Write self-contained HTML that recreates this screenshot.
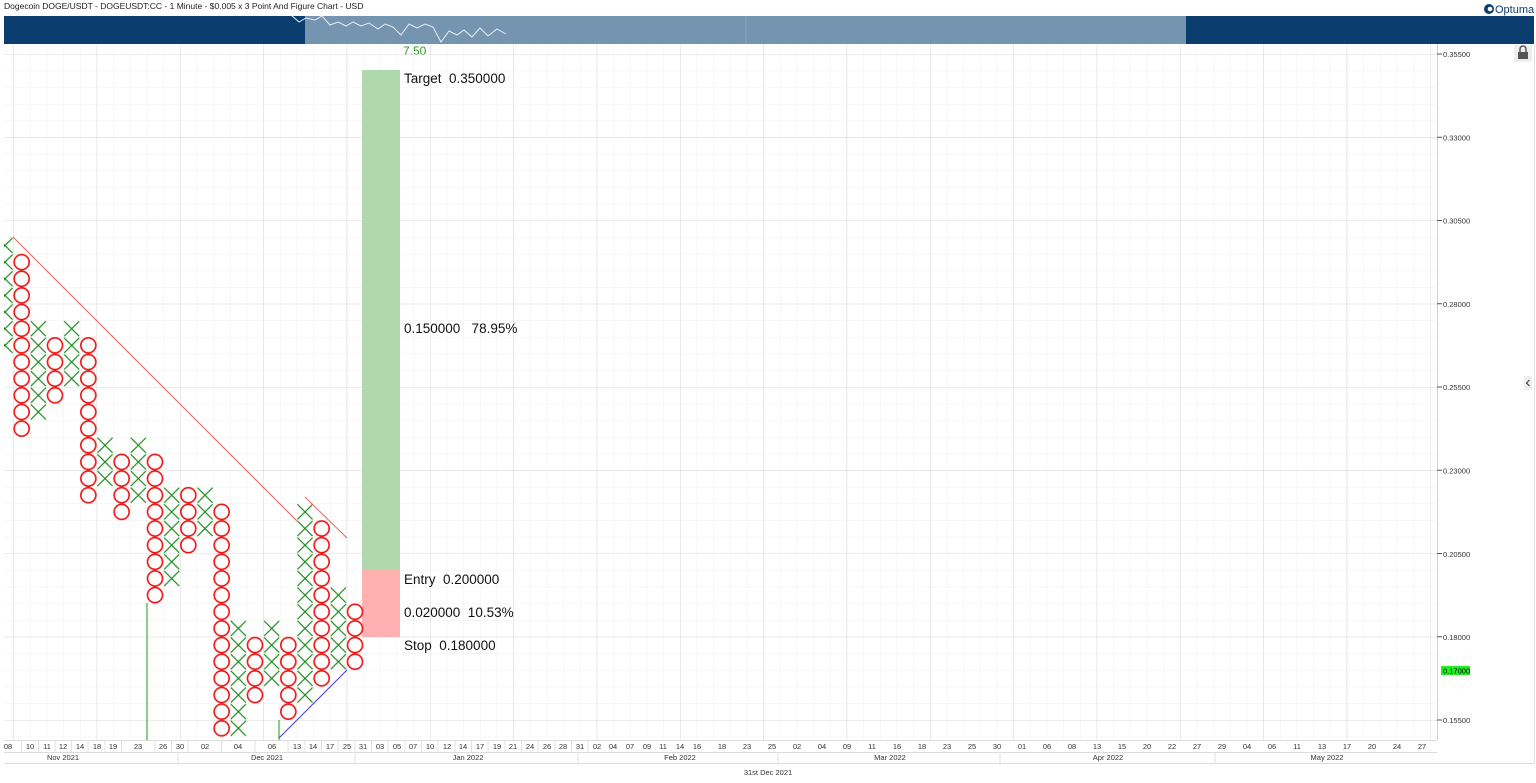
<!DOCTYPE html>
<html><head><meta charset="utf-8"><style>
html,body{margin:0;padding:0;background:#fff;width:1536px;height:783px;overflow:hidden;font-family:"Liberation Sans",sans-serif}
svg{position:absolute;left:0;top:0}
.pre{white-space:pre}
</style></head><body>
<svg width="1536" height="783" viewBox="0 0 1536 783" xmlns="http://www.w3.org/2000/svg" font-family="Liberation Sans, sans-serif">
<defs>
<pattern id="gmin" x="-3.333" y="54" width="16.667" height="16.65" patternUnits="userSpaceOnUse">
<path d="M0 0H16.667M0 0V16.65" stroke="#efefef" stroke-width="1" fill="none"/></pattern>
<pattern id="gmaj" x="13.333" y="54" width="83.333" height="83.25" patternUnits="userSpaceOnUse">
<path d="M0 0H83.333M0 0V83.25" stroke="#d9d9d9" stroke-width="1" fill="none"/></pattern>
<pattern id="PX" x="-3.333" y="54" width="16.667" height="16.65" patternUnits="userSpaceOnUse">
<path d="M0.8 0.8L15.9 15.9M15.9 0.8L0.8 15.9" stroke="#1e8c1e" stroke-width="1.2" fill="none"/></pattern>
<pattern id="PO" x="-3.333" y="54" width="16.667" height="16.65" patternUnits="userSpaceOnUse">
<circle cx="8.333" cy="8.325" r="7.5" stroke="#f01010" stroke-width="1.6" fill="none"/></pattern>
<clipPath id="cc"><rect x="4" y="44" width="1433" height="696"/></clipPath>
</defs>
<text x="4" y="9" font-size="8.5" fill="#222">Dogecoin DOGE/USDT - DOGEUSDT:CC - 1 Minute - $0.005 x 3 Point And Figure Chart - USD</text>
<circle cx="1489" cy="9" r="5" fill="#0b3d6e"/><circle cx="1490" cy="9" r="2.3" fill="#fff"/>
<text x="1495" y="13" font-size="11" fill="#0b3d6e">Optuma</text>
<rect x="4" y="16" width="1530" height="28" fill="#0b3d6e"/>
<rect x="305" y="16" width="881" height="28" fill="#7594b0"/>
<line x1="746" y1="16" x2="746" y2="44" stroke="#8aa6bf"/>
<polyline points="291,15 299,22 306,18 315,20 322,16 330,25 338,22 346,26 353,22 361,26 369,23 378,29 385,24 393,27 401,35 409,24 417,28 425,24 433,27 441,42 449,31 457,35 464,30 472,37 480,28 488,36 497,29 506,34" stroke="#e8eef4" stroke-width="1" fill="none"/>
<text x="403" y="55" font-size="12" fill="#2a9a2a">7.50</text>
<g clip-path="url(#cc)">
<rect x="4" y="44" width="1433" height="696" fill="url(#gmin)"/>
<rect x="4" y="44" width="1433" height="696" fill="url(#gmaj)"/>
<rect x="362" y="70" width="38" height="500" fill="#b0d8ae"/>
<rect x="362" y="570" width="38" height="67" fill="#ffb0b0"/>
<rect x="-3.333" y="237.15" width="16.667" height="116.55" fill="url(#PX)"/>
<rect x="13.333" y="253.8" width="16.667" height="183.15" fill="url(#PO)"/>
<rect x="30" y="320.4" width="16.667" height="99.9" fill="url(#PX)"/>
<rect x="46.667" y="337.05" width="16.667" height="66.6" fill="url(#PO)"/>
<rect x="63.333" y="320.4" width="16.667" height="66.6" fill="url(#PX)"/>
<rect x="80" y="337.05" width="16.667" height="166.5" fill="url(#PO)"/>
<rect x="96.667" y="436.95" width="16.667" height="49.95" fill="url(#PX)"/>
<rect x="113.333" y="453.6" width="16.667" height="66.6" fill="url(#PO)"/>
<rect x="130" y="436.95" width="16.667" height="66.6" fill="url(#PX)"/>
<rect x="146.667" y="453.6" width="16.667" height="149.85" fill="url(#PO)"/>
<rect x="163.333" y="486.9" width="16.667" height="99.9" fill="url(#PX)"/>
<rect x="180" y="486.9" width="16.667" height="66.6" fill="url(#PO)"/>
<rect x="196.667" y="486.9" width="16.667" height="49.95" fill="url(#PX)"/>
<rect x="213.333" y="503.55" width="16.667" height="233.1" fill="url(#PO)"/>
<rect x="230" y="620.1" width="16.667" height="116.55" fill="url(#PX)"/>
<rect x="246.667" y="636.75" width="16.667" height="66.6" fill="url(#PO)"/>
<rect x="263.333" y="620.1" width="16.667" height="66.6" fill="url(#PX)"/>
<rect x="280" y="636.75" width="16.667" height="83.25" fill="url(#PO)"/>
<rect x="296.667" y="503.55" width="16.667" height="199.8" fill="url(#PX)"/>
<rect x="313.333" y="520.2" width="16.667" height="166.5" fill="url(#PO)"/>
<rect x="330" y="586.8" width="16.667" height="83.25" fill="url(#PX)"/>
<rect x="346.667" y="603.45" width="16.667" height="66.6" fill="url(#PO)"/>
<line x1="13" y1="237" x2="297" y2="521" stroke="#f56060" stroke-width="1"/>
<line x1="305" y1="497" x2="347" y2="538" stroke="#f56060" stroke-width="1"/>
<line x1="279" y1="738" x2="347" y2="670" stroke="#3a3af0" stroke-width="1"/>
<line x1="147" y1="603" x2="147" y2="740" stroke="#1e9a1e" stroke-width="1"/>
<line x1="279" y1="720" x2="279" y2="740" stroke="#1e9a1e" stroke-width="1"/>
</g>
<g font-size="13.5" fill="#111" class="pre">
<text x="404" y="83" class="pre">Target  0.350000</text>
<text x="404" y="333" class="pre">0.150000   78.95%</text>
<text x="404" y="584" class="pre">Entry  0.200000</text>
<text x="404" y="617" class="pre">0.020000  10.53%</text>
<text x="404" y="650" class="pre">Stop  0.180000</text>
</g>
<line x1="1437.5" y1="44" x2="1437.5" y2="740" stroke="#d0d0d0"/>
<line x1="1534.5" y1="44" x2="1534.5" y2="763" stroke="#e0e0e0"/>
<g font-size="7.5" fill="#333">
<path d="M1437 54H1442M1437 137.25H1442M1437 220.5H1442M1437 303.75H1442M1437 387H1442M1437 470.25H1442M1437 553.5H1442M1437 636.75H1442M1437 720H1442" stroke="#555"/>
<text x="1443" y="57">0.35500</text><text x="1443" y="140.5">0.33000</text><text x="1443" y="223.5">0.30500</text>
<text x="1443" y="307">0.28000</text><text x="1443" y="390">0.25500</text><text x="1443" y="473.5">0.23000</text>
<text x="1443" y="557">0.20500</text><text x="1443" y="640">0.18000</text><text x="1443" y="723">0.15500</text>
<rect x="1441" y="666" width="29" height="9" fill="#22ee22"/>
<text x="1443" y="673.5" fill="#000">0.17000</text>
</g>
<rect x="1514" y="45" width="18" height="17" fill="#eee"/>
<rect x="1518" y="52" width="10" height="7" fill="#555"/>
<path d="M1520 52V49a3 3 0 0 1 6 0V52" stroke="#555" stroke-width="1.5" fill="none"/>
<rect x="1524" y="376" width="8" height="14" fill="#eee"/>
<path d="M1529.5 380L1526.5 383L1529.5 386" stroke="#333" fill="none"/>
<rect x="4" y="740" width="1433" height="23" fill="#fff"/>
<path d="M4 740.5H1437M4 752.5H1437M4 763.5H1534" stroke="#dcdcdc"/>
<g font-size="7.5" fill="#333" text-anchor="middle">
<text x="8" y="749">08</text><text x="30" y="749">10</text><text x="47" y="749">11</text><text x="63" y="749">12</text><text x="80" y="749">14</text><text x="97" y="749">18</text><text x="113" y="749">19</text><text x="138" y="749">23</text><text x="163" y="749">26</text><text x="180" y="749">30</text><text x="205" y="749">02</text><text x="238" y="749">04</text><text x="272" y="749">06</text><text x="297" y="749">13</text><text x="313" y="749">14</text><text x="330" y="749">17</text><text x="347" y="749">25</text><text x="363" y="749">31</text><text x="380" y="749">03</text><text x="397" y="749">05</text><text x="413" y="749">07</text><text x="430" y="749">10</text><text x="447" y="749">12</text><text x="463" y="749">14</text><text x="480" y="749">17</text><text x="497" y="749">19</text><text x="513" y="749">21</text><text x="530" y="749">24</text><text x="547" y="749">26</text><text x="563" y="749">28</text><text x="580" y="749">31</text><text x="597" y="749">02</text><text x="613" y="749">04</text><text x="630" y="749">07</text><text x="647" y="749">09</text><text x="663" y="749">11</text><text x="680" y="749">14</text><text x="697" y="749">16</text><text x="722" y="749">18</text><text x="747" y="749">23</text><text x="772" y="749">25</text><text x="797" y="749">02</text><text x="822" y="749">04</text><text x="847" y="749">09</text><text x="872" y="749">11</text><text x="897" y="749">16</text><text x="922" y="749">18</text><text x="947" y="749">23</text><text x="972" y="749">25</text><text x="997" y="749">30</text><text x="1022" y="749">01</text><text x="1047" y="749">06</text><text x="1072" y="749">08</text><text x="1097" y="749">13</text><text x="1122" y="749">15</text><text x="1147" y="749">20</text><text x="1172" y="749">22</text><text x="1197" y="749">27</text><text x="1222" y="749">29</text><text x="1247" y="749">04</text><text x="1272" y="749">06</text><text x="1297" y="749">11</text><text x="1322" y="749">13</text><text x="1347" y="749">17</text><text x="1372" y="749">20</text><text x="1397" y="749">24</text><text x="1422" y="749">27</text>
<text x="63" y="760">Nov 2021</text><text x="267" y="760">Dec 2021</text><text x="468" y="760">Jan 2022</text><text x="680" y="760">Feb 2022</text><text x="890" y="760">Mar 2022</text><text x="1108" y="760">Apr 2022</text><text x="1327" y="760">May 2022</text>
<text x="768" y="775">31st Dec 2021</text>
</g>
<path d="M21.5 740V752M38.5 740V752M55 740V752M71.5 740V752M88 740V752M105 740V752M121.5 740V752M155 740V752M171.5 740V752M188 740V752M221.5 740V752M255 740V752M288 740V752M305 740V752M321.5 740V752M338 740V752M355 740V752M371.5 740V752M388 740V752M405 740V752M421.5 740V752M438 740V752M455 740V752M471.5 740V752M488 740V752M505 740V752M521.5 740V752M538 740V752M555 740V752M571.5 740V752M588 740V752M178 752V763M355 752V763M578 752V763M778 752V763M1000 752V763M1215 752V763" stroke="#e2e2e2"/>
</svg>
</body></html>
